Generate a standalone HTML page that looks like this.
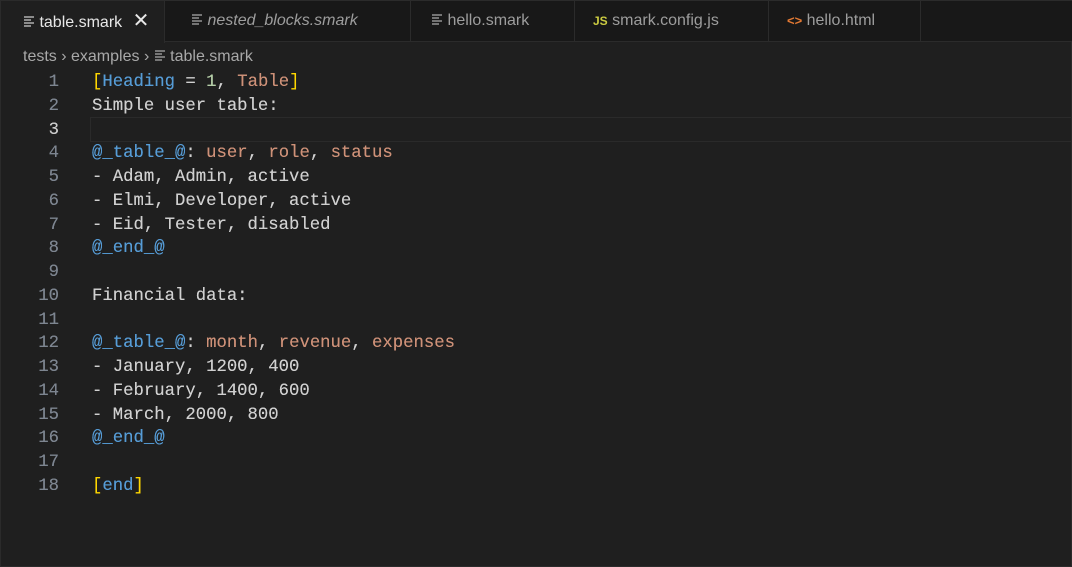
<!DOCTYPE html>
<html><head><meta charset="utf-8"><style>
*{margin:0;padding:0;box-sizing:border-box}
body{width:1072px;height:567px;background:#1f1f1f;overflow:hidden;position:relative;font-family:"Liberation Sans",sans-serif;border:1px solid #2b2b2b}
.tabs{position:absolute;left:0;top:0;width:1072px;height:41px;background:#181818;border-bottom:1px solid #2b2b2b}
.tab{position:absolute;top:0;height:41px;border-right:1px solid #2b2b2b;color:#9d9d9d;font-size:16px;line-height:40px;white-space:nowrap}
.tab.act{background:#1f1f1f;color:#e8e8e8;height:42px}
.ic{display:inline-block;vertical-align:middle;margin-top:-3px}
.bc{position:absolute;left:22px;top:45px;color:#a9a9a9;font-size:16px;line-height:22px;white-space:nowrap}
.code{position:absolute;left:0;top:70px;font-family:"Liberation Mono",monospace;font-size:17.3px;line-height:23.76px;color:#d0d0d0;white-space:pre;text-shadow:0 0 0.3px currentColor}
.ln{position:absolute;left:0;width:58px;text-align:right;color:#7d8590}
.tx{position:absolute;left:91px}
.cur{position:absolute;left:89px;top:116px;width:990px;height:25px;border:1px solid #2a2a2a}
.b{color:#569cd6}.s{color:#ce9178}.n{color:#b5cea8}.y{color:#ffd700}
</style></head><body>
<div class="tabs">
<div class="tab act" style="left:0;width:164px;padding-left:22px"><svg class="ic" width="12" height="12" viewBox="0 0 12 12"><path d="M1 2h10M1 5h7M1 8h10M1 11h7" stroke="#ccc" stroke-width="1.3"/></svg> table.smark <span style="font-size:20px;margin-left:6px">✕</span></div>
<div class="tab" style="left:164px;width:246px;padding-left:26px;font-style:italic"><svg class="ic" width="12" height="12" viewBox="0 0 12 12"><path d="M1 2h10M1 5h7M1 8h10M1 11h7" stroke="#aaa" stroke-width="1.3"/></svg> nested_blocks.smark</div>
<div class="tab" style="left:410px;width:164px;padding-left:20px"><svg class="ic" width="12" height="12" viewBox="0 0 12 12"><path d="M1 2h10M1 5h7M1 8h10M1 11h7" stroke="#aaa" stroke-width="1.3"/></svg> hello.smark</div>
<div class="tab" style="left:574px;width:194px;padding-left:18px"><span style="color:#cbcb41;font-weight:bold;font-size:12px;vertical-align:middle">JS</span> smark.config.js</div>
<div class="tab" style="left:768px;width:152px;padding-left:18px"><span style="color:#e37933;font-weight:bold;font-size:13px">&lt;&gt;</span> hello.html</div>
</div>
<div class="bc">tests <span>›</span> examples <span>›</span> <svg class="ic" width="12" height="12" viewBox="0 0 12 12"><path d="M1 2h10M1 5h7M1 8h10M1 11h7" stroke="#aaa" stroke-width="1.3"/></svg> table.smark</div>
<div class="cur"></div>
<div class="code">
<div class="ln" style="top:0">1</div><div class="tx" style="top:0"><span class="y">[</span><span class="b">Heading</span> = <span class="n">1</span>, <span class="s">Table</span><span class="y">]</span></div>
<div class="ln" style="top:23.76px">2</div><div class="tx" style="top:23.76px">Simple user table:</div>
<div class="ln" style="top:47.52px;color:#ccc">3</div>
<div class="ln" style="top:71.28px">4</div><div class="tx" style="top:71.28px"><span class="b">@_table_@</span>: <span class="s">user</span>, <span class="s">role</span>, <span class="s">status</span></div>
<div class="ln" style="top:95.04px">5</div><div class="tx" style="top:95.04px">- Adam, Admin, active</div>
<div class="ln" style="top:118.8px">6</div><div class="tx" style="top:118.8px">- Elmi, Developer, active</div>
<div class="ln" style="top:142.56px">7</div><div class="tx" style="top:142.56px">- Eid, Tester, disabled</div>
<div class="ln" style="top:166.32px">8</div><div class="tx b" style="top:166.32px">@_end_@</div>
<div class="ln" style="top:190.08px">9</div>
<div class="ln" style="top:213.84px">10</div><div class="tx" style="top:213.84px">Financial data:</div>
<div class="ln" style="top:237.6px">11</div>
<div class="ln" style="top:261.36px">12</div><div class="tx" style="top:261.36px"><span class="b">@_table_@</span>: <span class="s">month</span>, <span class="s">revenue</span>, <span class="s">expenses</span></div>
<div class="ln" style="top:285.12px">13</div><div class="tx" style="top:285.12px">- January, 1200, 400</div>
<div class="ln" style="top:308.88px">14</div><div class="tx" style="top:308.88px">- February, 1400, 600</div>
<div class="ln" style="top:332.64px">15</div><div class="tx" style="top:332.64px">- March, 2000, 800</div>
<div class="ln" style="top:356.4px">16</div><div class="tx b" style="top:356.4px">@_end_@</div>
<div class="ln" style="top:380.16px">17</div>
<div class="ln" style="top:403.92px">18</div><div class="tx" style="top:403.92px"><span class="y">[</span><span class="b">end</span><span class="y">]</span></div>
</div>
</body></html>
